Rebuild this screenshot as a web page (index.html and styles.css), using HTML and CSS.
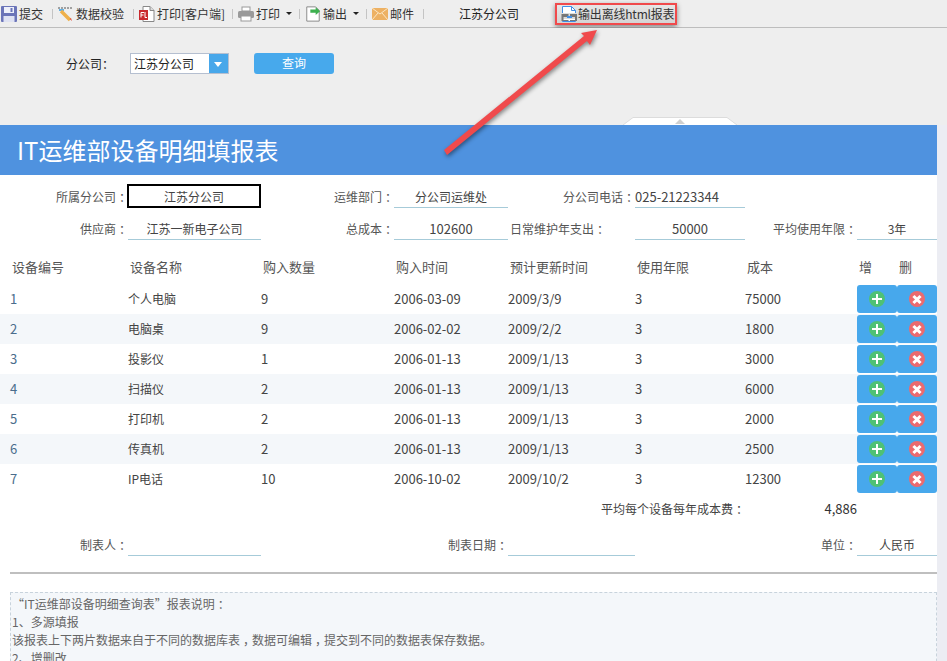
FILE: index.html
```html
<!DOCTYPE html>
<html lang="zh">
<head>
<meta charset="utf-8">
<title>IT运维部设备明细填报表</title>
<link rel="stylesheet" href="styles.css">
</head>
<body>
<div class="page">
  <div class="toolbar">
    <div class="tool tool-submit"><svg class="ic" viewBox="0 0 16 16"><rect x="0" y="0" width="16" height="16" rx="1" fill="#6b74b8"/><rect x="3" y="1" width="10" height="6" fill="#eef0fa"/><rect x="9.500" y="2" width="2" height="4" fill="#6b74b8"/><rect x="2.500" y="10" width="11" height="6" fill="#dfe2f3"/></svg><span>提交</span></div>
    <i class="sep"></i>
    <div class="tool"><svg class="ic" viewBox="0 0 16 16"><path d="M0 2h15" stroke="#555" stroke-width="1" stroke-dasharray="2 1"/><path d="M1 4h5" stroke="#2f9be0" stroke-width="1.500"/><path d="M3 5l9 9" stroke="#eeb04a" stroke-width="3.500"/><path d="M11.500 13l2.500 2-1-3z" fill="#e0503f"/></svg><span>数据校验</span></div>
    <i class="sep"></i>
    <div class="tool tool-client"><svg class="ic" viewBox="0 0 16 16"><path d="M4 .5h7l4 4v11H4z" fill="#fff" stroke="#888"/><path d="M11 .5v4h4" fill="#ddd" stroke="#888"/><rect x="0" y="4" width="9" height="10" fill="#c9282d"/><path d="M2 6.500h3M2 6.500v5M2 9h2.500M6 6v5.500h2" stroke="#fff" fill="none"/></svg><span>打印[客户端]</span></div>
    <i class="sep"></i>
    <div class="tool tool-menu"><svg class="ic" viewBox="0 0 16 16"><rect x="4" y="1" width="8" height="4" fill="#fff" stroke="#999"/><rect x="0" y="5" width="16" height="7" rx="1.500" fill="#9a9a9a"/><rect x="3" y="10" width="10" height="5" fill="#fff" stroke="#999"/></svg><span>打印</span><b class="caret"></b></div>
    <i class="sep"></i>
    <div class="tool tool-menu"><svg class="ic" viewBox="0 0 16 18"><path d="M1 1h10l4 4v12H1z" fill="#fff" stroke="#808080"/><path d="M5 4h6V1.500L16 6l-5 4V7.500H5z" fill="#3eb04f"/></svg><span>输出</span><b class="caret"></b></div>
    <i class="sep"></i>
    <div class="tool"><svg class="ic" viewBox="0 0 16 14"><rect y="1" width="16" height="12" fill="#edb163"/><path d="M0 1l8 6 8-6M0 13l6-7M16 13l-6-7" fill="none" stroke="#fbe6c4"/></svg><span>邮件</span></div>
    <i class="sep"></i>
    <div class="tool-name">江苏分公司</div>
    <div class="tool tool-hl"><svg class="ic" viewBox="0 0 16 16"><path d="M1.500 7V.5h9l4 4V7M1.500 13v2.500h13V13" fill="#fff" stroke="#3f8fe8"/><path d="M10.500.5v4h4" fill="none" stroke="#3f8fe8"/><path d="M.5 8h7v3h-5v3h5v1h-7zM9 8h7v7H9v-1h5v-3H9z" fill="#777"/><rect x="6" y="10" width="5" height="2" fill="#3f8fe8"/></svg><span>输出离线html报表</span></div>
  </div>

  <div class="params">
    <span class="param-label">分公司：</span>
    <div class="combo"><span class="combo-text">江苏分公司</span><span class="combo-btn"></span></div>
    <div class="query">查询</div>
    <svg class="handle" width="114" height="8" viewBox="0 0 114 8"><path d="M0 8L10 .5h94L114 8" fill="#fff" stroke="#dcdcdc"/><path d="M52 7l5-5 5 5z" fill="#cfcfcf"/></svg>
  </div>

  <div class="strip">
    <div class="report">
      <div class="title">IT运维部设备明细填报表</div>

      <div class="grid form first">
        <div class="lab s2">所属分公司<span class="cz">：</span></div><div class="val focus">江苏分公司</div>
        <div class="lab">运维部门<span class="cz">：</span></div><div class="val">分公司运维处</div>
        <div class="lab">分公司电话<span class="cz">：</span></div><div class="val left num">025-21223344</div>
      </div>
      <div class="grid form second">
        <div class="lab s2">供应商<span class="cz">：</span></div><div class="val">江苏一新电子公司</div>
        <div class="lab">总成本<span class="cz">：</span></div><div class="val num">102600</div>
        <div class="lab lab-left">日常维护年支出<span class="cz">：</span></div><div class="val num">50000</div>
        <div class="lab">平均使用年限<span class="cz">：</span></div><div class="val">3年</div>
      </div>

      <div class="grid head">
        <div class="c2">设备编号</div><div>设备名称</div><div>购入数量</div><div>购入时间</div><div>预计更新时间</div><div>使用年限</div><div>成本</div><div>增</div><div>删</div>
      </div>

      <div class="grid row">
        <div class="c2 num">1</div><div>个人电脑</div><div class="num">9</div><div class="num">2006-03-09</div><div class="num">2009/3/9</div><div class="num">3</div><div class="num">75000</div>
        <div class="act"><i class="dot add"></i></div><div class="act"><i class="dot del"></i></div>
      </div>
      <div class="grid row alt">
        <div class="c2 num">2</div><div>电脑桌</div><div class="num">9</div><div class="num">2006-02-02</div><div class="num">2009/2/2</div><div class="num">3</div><div class="num">1800</div>
        <div class="act"><i class="dot add"></i></div><div class="act"><i class="dot del"></i></div>
      </div>
      <div class="grid row">
        <div class="c2 num">3</div><div>投影仪</div><div class="num">1</div><div class="num">2006-01-13</div><div class="num">2009/1/13</div><div class="num">3</div><div class="num">3000</div>
        <div class="act"><i class="dot add"></i></div><div class="act"><i class="dot del"></i></div>
      </div>
      <div class="grid row alt">
        <div class="c2 num">4</div><div>扫描仪</div><div class="num">2</div><div class="num">2006-01-13</div><div class="num">2009/1/13</div><div class="num">3</div><div class="num">6000</div>
        <div class="act"><i class="dot add"></i></div><div class="act"><i class="dot del"></i></div>
      </div>
      <div class="grid row">
        <div class="c2 num">5</div><div>打印机</div><div class="num">2</div><div class="num">2006-01-13</div><div class="num">2009/1/13</div><div class="num">3</div><div class="num">2000</div>
        <div class="act"><i class="dot add"></i></div><div class="act"><i class="dot del"></i></div>
      </div>
      <div class="grid row alt">
        <div class="c2 num">6</div><div>传真机</div><div class="num">2</div><div class="num">2006-01-13</div><div class="num">2009/1/13</div><div class="num">3</div><div class="num">2500</div>
        <div class="act"><i class="dot add"></i></div><div class="act"><i class="dot del"></i></div>
      </div>
      <div class="grid row">
        <div class="c2 num">7</div><div>IP电话</div><div class="num">10</div><div class="num">2006-10-02</div><div class="num">2009/10/2</div><div class="num">3</div><div class="num">12300</div>
        <div class="act"><i class="dot add"></i></div><div class="act"><i class="dot del"></i></div>
      </div>

      <div class="grid avg">
        <div class="avg-label">平均每个设备每年成本费<span class="cz">：</span></div><div class="avg-val num">4,886</div>
      </div>

      <div class="grid form maker">
        <div class="lab s2">制表人<span class="cz">：</span></div><div class="val"></div>
        <div class="lab s2c">制表日期<span class="cz">：</span></div><div class="val"></div>
        <div class="lab s2c">单位<span class="cz">：</span></div><div class="val">人民币</div>
      </div>

      <div class="rule"></div>

      <div class="notes">
        <p>“IT运维部设备明细查询表”报表说明<span class="cz">：</span></p>
        <p>1、多源填报</p>
        <p>该报表上下两片数据来自于不同的数据库表<span class="cz">，</span>数据可编辑<span class="cz">，</span>提交到不同的数据表保存数据。</p>
        <p>2、增删改</p>
      </div>
    </div>
  </div>

  <svg class="arrow" width="947" height="170" viewBox="0 0 947 170"><path d="M444 150L584 36l-3-3 16-3-7 15-3-4L447 155z" fill="#f04a4c"/></svg>
</div>
</body>
</html>
```

FILE: styles.css
```css
* { box-sizing: border-box; }
html, body { margin: 0; padding: 0; background: #fff; }
body {
  font-family: "Noto Sans CJK SC", "Noto Sans", sans-serif;
  font-size: 12px;
  color: #333;
}
.page {
  position: relative;
  width: 947px;
  height: 661px;
  overflow: hidden;
  background: #eee;
}
/* the reference's font centres its full-width colon and comma in the em box */
.cz { font-feature-settings: "halt"; margin: 0 3px; }
.num { font-size: 13px; }

/* toolbar */
.toolbar {
  display: flex;
  align-items: center;
  height: 28px;
  padding-left: 1px;
  background: #eee;
  border-bottom: 1px solid #bdbdbd;
}
.tool { display: flex; align-items: center; gap: 2px; height: 22px; line-height: 22px; white-space: nowrap; }
.tool-client { width: 84px; }
.tool-menu { width: 52px; }
.ic { width: 16px; height: 16px; flex: none; }
.caret {
  width: 0; height: 0; margin-left: 4px;
  border-left: 3px solid transparent;
  border-right: 3px solid transparent;
  border-top: 3px solid #222;
}
.sep { width: 1px; height: 10px; margin: 0 5px 0 9px; background: #c4c4c4; flex: none; }
.tool-name { margin-left: 30px; color: #222; }
.tool-hl {
  width: 122px;
  margin-left: 36px;
  padding: 0 0 0 4px;
  height: 22px;
  gap: 1px;
  letter-spacing: -.2px;
  overflow: hidden;
  border: 2px solid #f04a4c;
  background: linear-gradient(#e6e6e6, #d4d4d4);
  box-shadow: 0 2px 5px rgba(0,0,0,.45);
}

/* query parameters */
.params {
  position: relative;
  display: flex;
  align-items: flex-start;
  height: 97px;
  padding: 25px 0 0 66px;
  background: #eee;
}
.param-label { width: 64px; line-height: 21px; color: #222; }
.combo {
  display: flex;
  width: 99px;
  height: 21px;
  border: 1px solid #b5bfd0;
  background: #fff;
}
.combo-text { flex: 1; padding-left: 3px; line-height: 20px; color: #222; }
.combo-btn {
  position: relative;
  width: 19px;
  background: #47a7ea;
}
.combo-btn::after {
  content: "";
  position: absolute;
  left: 5px; top: 8px;
  border-left: 4px solid transparent;
  border-right: 4px solid transparent;
  border-top: 5px solid #fff;
}
.query {
  width: 80px;
  height: 21px;
  margin-left: 25px;
  border-radius: 3px;
  background: #47a9ec;
  color: #fff;
  font-size: 12px;
  line-height: 20px;
  text-align: center;
}
.handle { position: absolute; left: 623px; bottom: 0; }

/* report */
.strip { display: flex; background: #ecedf3; height: 536px; }
.report { width: 937px; background: #fff; flex: none; }
.title {
  height: 50px;
  padding-left: 17px;
  background: #4f92df;
  color: #fff;
  font-size: 24px;
  line-height: 50px;
}
.grid {
  display: grid;
  grid-template-columns: 10px 118px 133px 133px 114px 127px 110px 112px 40px 40px;
  align-items: center;
}

.form { height: 23px; }
.form.first { margin-top: 10px; }
.form.second { margin-top: 9px; }
.form > * { height: 23px; line-height: 23px; white-space: nowrap; }
.lab { text-align: right; color: #555; }
.lab-left { padding-left: 2px; text-align: left; }
.s2 { grid-column: span 2; }
.val { text-align: center; border-bottom: 1px solid #a6cbd9; color: #444; }
.form .val:last-child { grid-column: span 2; }
.form.first .val:last-child { grid-column: auto; }
.val.left { text-align: left; }
.form > .focus {
  align-self: start;
  width: 134px;
  height: 24px;
  margin: -1px 0 0 -1px;
  border: 2px solid #000;
  line-height: 21px;
}
.s2c { grid-column: span 2; }

.head { height: 34px; margin-top: 10px; font-size: 13px; color: #555; }
.head > div { padding: 0 0 2px 2px; }
.head > .c2 { grid-column: 1 / span 2; padding-left: 12px; }
.row { height: 30px; color: #444; }
.row > div:not(.act) { padding-bottom: 2px; }
.row > .c2 { grid-column: 1 / span 2; padding-left: 10px; color: #4a6d8c; }
.alt { background: #f4f7fa; }
.act {
  display: flex;
  align-items: center;
  justify-content: center;
  align-self: start;
  height: 28px;
  margin-top: 1px;
  background: #47a8ec;
  border-radius: 3px;
}
.dot {
  position: relative;
  width: 16px;
  height: 16px;
  border-radius: 50%;
}
.add { background: #4fc175; }
.del { background: #ec6a6e; }
.dot::before, .dot::after {
  content: "";
  position: absolute;
  left: 3px; top: 7px;
  width: 10px; height: 2px;
  background: #fff;
}
.add::after { transform: rotate(90deg); }
.del::before { transform: rotate(45deg); height: 3px; }
.del::after { transform: rotate(-45deg); height: 3px; }

.avg { height: 28px; }
.avg-label { grid-column: 5 / span 3; text-align: right; color: #444; }
.avg-val { grid-column: 8; text-align: right; color: #333; }

.form.maker { margin-top: 11px; }

.rule { height: 2px; margin: 16px 0 0 10px; background: #bfbfbf; }
.notes {
  height: 90px;
  margin: 18px 0 0 10px;
  padding: 2px 0 0 1px;
  background: #f4f7fa;
  border: 1px dashed #c8d3dc;
  color: #666;
  line-height: 18px;
}
.notes p { margin: 0; white-space: nowrap; }

.arrow {
  position: absolute;
  left: 0; top: 0;
  pointer-events: none;
  filter: drop-shadow(1px 2px 2px rgba(0,0,0,.45));
}
```
